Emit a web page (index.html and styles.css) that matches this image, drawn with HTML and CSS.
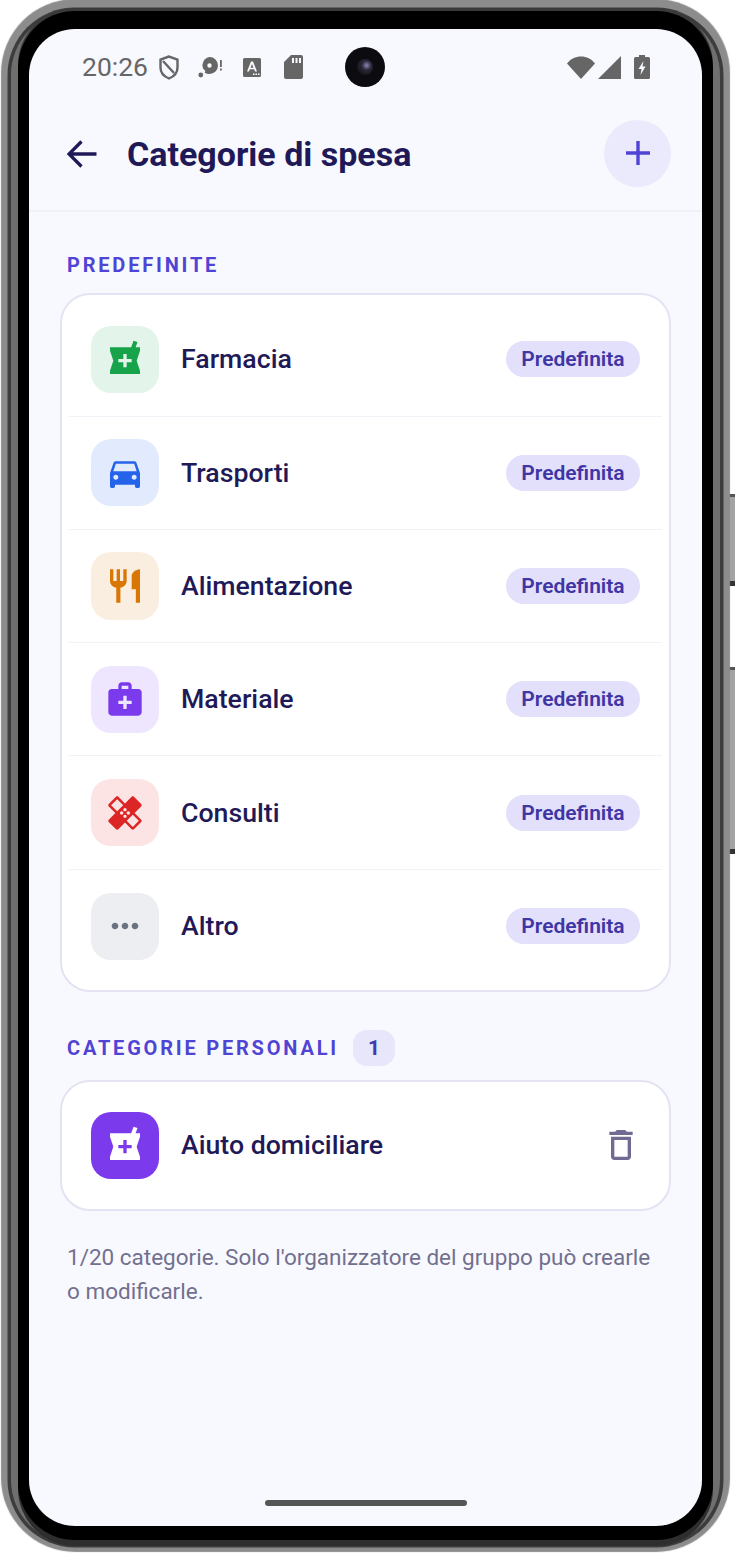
FILE: index.html
```html
<!DOCTYPE html>
<html lang="it">
  <head>
    <meta charset="UTF-8" />
    <meta name="viewport" content="width=device-width, initial-scale=1.0" />
    <title>Categorie di spesa</title>
    <link rel="stylesheet" href="styles.css">
  </head>

  <body>
    <div class="phone">
      <div class="side-btn side-btn-top"></div>
      <div class="side-btn side-btn-bottom"></div>

      <div class="screen">
        <div class="camera"><span></span></div>

        <div class="status-bar">
          <div class="status-left">
            <span class="time">20:26</span>
            <svg class="st-shield" viewBox="0 0 20 25"><path d="M10 1.500 1.500 4.500v8c0 5 3.500 9 8.500 11 5-2 8.500-6 8.500-11v-8z" fill="none" stroke="#666" stroke-width="2.400"/><path d="M4 6l11 12" stroke="#666" stroke-width="2.400"/></svg>
            <svg class="st-disc" viewBox="0 0 25 24"><path fill-rule="evenodd" fill="#666" d="M11.500 2a8.500 8.500 0 0 1 0 17 8.500 8.500 0 0 1-5-1.600l1-1.400-2.500-2.500A8.500 8.500 0 0 1 11.500 2zm0 6.300a2.200 2.200 0 1 0 0 4.400 2.200 2.200 0 0 0 0-4.400z"/><circle cx="2.800" cy="20" r="2.400" fill="#666"/><rect x="22" y="5" width="1.800" height="7" fill="#666"/><rect x="22" y="13.500" width="1.800" height="2" fill="#666"/></svg>
            <svg class="st-font" viewBox="0 0 18 19"><path fill-rule="evenodd" fill="#666" d="M1.500 0h15A1.500 1.500 0 0 1 18 1.500v16a1.500 1.500 0 0 1-1.500 1.500h-15A1.500 1.500 0 0 1 0 17.500v-16A1.500 1.500 0 0 1 1.500 0zM8 3.500 4 13.500h2l.8-2.200h4.400l.8 2.200h2L10 3.500zm1 2.400 1.500 3.800h-3z"/><rect x="10" y="15.500" width="1.500" height="1.500" fill="#fff"/><rect x="12.500" y="15.500" width="1.500" height="1.500" fill="#fff"/><rect x="15" y="15.500" width="1.500" height="1.500" fill="#fff"/></svg>
            <svg class="st-sd" viewBox="0 0 19 24"><path fill-rule="evenodd" fill="#666" d="M7 0h10a2 2 0 0 1 2 2v20a2 2 0 0 1-2 2H2a2 2 0 0 1-2-2V7zm1 3v5h2V3zm3.500 0v5h2V3zm3.500 0v5h2V3z"/></svg>
          </div>
          <div class="status-right">
            <svg class="st-wifi" viewBox="0 0 28 23"><path fill="#666" d="M14 23 0 7.500C3.500 3 8.500.5 14 .5s10.500 2.500 14 7z"/></svg>
            <svg class="st-signal" viewBox="0 0 23 23"><path fill="#666" d="M23 0v23H0z"/></svg>
            <svg class="st-battery" viewBox="0 0 16 24"><path fill-rule="evenodd" fill="#666" d="M5 0h6v2h3.500A1.500 1.500 0 0 1 16 3.500v19a1.500 1.500 0 0 1-1.500 1.500h-13A1.500 1.500 0 0 1 0 22.500v-19A1.500 1.500 0 0 1 1.500 2H5zm4.500 6L4.500 14H7.500l-1 6 5-8.500H8.500z"/></svg>
          </div>
        </div>

        <header class="app-header">
          <div class="header-left">
            <svg class="back-icon" viewBox="0 0 30 28"><path d="M29.500 14H2M14.500 1.500 2 14l12.500 12.500" fill="none" stroke="#1f1a57" stroke-width="3.300"/></svg>
            <h1>Categorie di spesa</h1>
          </div>
          <button class="add-btn">
            <svg viewBox="0 0 26 26"><path d="M13 1v24M1 13h24" fill="none" stroke="#5044d4" stroke-width="3.400"/></svg>
          </button>
        </header>

        <main class="content">
          <h2 class="section-label">PREDEFINITE</h2>
          <div class="card">
            <div class="row">
              <div class="cat-icon green"><svg viewBox="0 0 24 24"><path d="M21 5h-2.640l1.140-3.140L17.150 1l-1.460 4H3v2l2 6-2 6v2h18v-2l-2-6 2-6V5zm-5 9h-3v3h-2v-3H8v-2h3V9h2v3h3v2z"/></svg></div>
              <span class="cat-name">Farmacia</span>
              <span class="badge">Predefinita</span>
            </div>
            <div class="row">
              <div class="cat-icon blue"><svg viewBox="0 0 24 24"><path d="M18.920 6.010C18.720 5.420 18.160 5 17.500 5h-11c-.66 0-1.210.42-1.420 1.010L3 12v8c0 .55.45 1 1 1h1c.55 0 1-.45 1-1v-1h12v1c0 .55.45 1 1 1h1c.55 0 1-.45 1-1v-8l-2.080-5.990zM6.500 16c-.83 0-1.500-.67-1.500-1.500S5.670 13 6.500 13s1.500.67 1.500 1.500S7.330 16 6.500 16zm11 0c-.83 0-1.500-.67-1.500-1.500s.67-1.500 1.500-1.500 1.500.67 1.500 1.500-.67 1.500-1.500 1.500zM5 11l1.500-4.500h11L19 11H5z"/></svg></div>
              <span class="cat-name">Trasporti</span>
              <span class="badge">Predefinita</span>
            </div>
            <div class="row">
              <div class="cat-icon orange"><svg viewBox="0 0 24 24"><path d="M11 9H9V2H7v7H5V2H3v7c0 2.120 1.660 3.840 3.750 3.970V22h2.500v-9.030C11.340 12.840 13 11.120 13 9V2h-2v7zm5-3v8h2.500v8H21V2c-2.760 0-5 2.240-5 4z"/></svg></div>
              <span class="cat-name">Alimentazione</span>
              <span class="badge">Predefinita</span>
            </div>
            <div class="row">
              <div class="cat-icon purple"><svg viewBox="0 0 24 24"><path d="M20 6h-4V4c0-1.100-.9-2-2-2h-4c-1.100 0-2 .9-2 2v2H4c-1.100 0-2 .9-2 2v12c0 1.100.9 2 2 2h16c1.100 0 2-.9 2-2V8c0-1.100-.9-2-2-2zM10 4h4v2h-4V4zm6 11h-3v3h-2v-3H8v-2h3v-3h2v3h3v2z"/></svg></div>
              <span class="cat-name">Materiale</span>
              <span class="badge">Predefinita</span>
            </div>
            <div class="row">
              <div class="cat-icon red"><svg viewBox="0 0 24 24"><path d="M17.730 12.020l3.980-3.980c.39-.39.39-1.020 0-1.410l-4.340-4.340c-.39-.39-1.020-.39-1.410 0l-3.980 3.980L8 2.290C7.800 2.100 7.550 2 7.290 2c-.25 0-.51.1-.7.29L2.250 6.630c-.39.39-.39 1.020 0 1.410l3.980 3.980L2.250 16c-.39.39-.39 1.020 0 1.410l4.340 4.340c.39.39 1.020.39 1.410 0l3.980-3.980 3.980 3.980c.2.2.45.29.71.29.26 0 .51-.1.71-.29l4.340-4.340c.39-.39.39-1.020 0-1.410l-3.990-3.980zM12 9c.55 0 1 .45 1 1s-.45 1-1 1-1-.45-1-1 .45-1 1-1zm-4.710 1.960L3.660 7.340l3.630-3.630 3.620 3.620-3.620 3.630zM10 13c-.55 0-1-.45-1-1s.45-1 1-1 1 .45 1 1-.45 1-1 1zm2 2c-.55 0-1-.45-1-1s.45-1 1-1 1 .45 1 1-.45 1-1 1zm2-4c.55 0 1 .45 1 1s-.45 1-1 1-1-.45-1-1 .45-1 1-1zm2.660 9.340l-3.630-3.620 3.630-3.630 3.620 3.620-3.620 3.630z"/></svg></div>
              <span class="cat-name">Consulti</span>
              <span class="badge">Predefinita</span>
            </div>
            <div class="row">
              <div class="cat-icon gray"><svg viewBox="0 0 24 24"><path d="M6 10c-1.100 0-2 .9-2 2s.9 2 2 2 2-.9 2-2-.9-2-2-2zm12 0c-1.100 0-2 .9-2 2s.9 2 2 2 2-.9 2-2-.9-2-2-2zm-6 0c-1.100 0-2 .9-2 2s.9 2 2 2 2-.9 2-2-.9-2-2-2z"/></svg></div>
              <span class="cat-name">Altro</span>
              <span class="badge">Predefinita</span>
            </div>
          </div>

          <div class="section-head">
            <h2 class="section-label">CATEGORIE PERSONALI</h2>
            <span class="count">1</span>
          </div>
          <div class="card card-single">
            <div class="row">
              <div class="cat-icon solid"><svg viewBox="0 0 24 24"><path d="M21 5h-2.640l1.140-3.140L17.150 1l-1.460 4H3v2l2 6-2 6v2h18v-2l-2-6 2-6V5zm-5 9h-3v3h-2v-3H8v-2h3V9h2v3h3v2z"/></svg></div>
              <span class="cat-name">Aiuto domiciliare</span>
              <svg class="trash" viewBox="0 0 24 24"><path d="M16 9v10H8V9h8m-1.500-6h-5l-1 1H5v2h14V4h-3.500l-1-1zM18 7H6v12c0 1.100.9 2 2 2h8c1.100 0 2-.9 2-2V7z"/></svg>
            </div>
          </div>

          <p class="note">1/20 categorie. Solo l'organizzatore del gruppo può crearle o modificarle.</p>
        </main>

        <div class="home-bar"></div>
      </div>
    </div>
  </body>
</html>
```

FILE: styles.css
```css
* {
  margin: 0;
  padding: 0;
  box-sizing: border-box;
}

body {
  background-color: #ffffff;
  font-family: "Roboto", sans-serif;
  color: #1f1a57;
  overflow: hidden;
}

.phone {
  position: relative;
  width: 735px;
  height: 1553px;
  padding: 29px 33px 27px 29px;
}

.side-btn {
  position: absolute;
  left: 729px;
  width: 6px;
  background-color: #a3a3a3;
  border-top: 3px solid #555555;
  border-bottom: 5px solid #333333;
}

.side-btn-top {
  top: 494px;
  height: 92px;
}

.side-btn-bottom {
  top: 667px;
  height: 187px;
}

.screen {
  position: relative;
  display: flex;
  flex-direction: column;
  width: 673px;
  height: 1497px;
  background-color: #f8f9fe;
  border-radius: 46px;
  box-shadow:
    0 0 0 11px #000000,
    0 -7px 0 11px #000000,
    0 3px 0 11px #000000,
    0 -10px 0 11px #3a3a3a,
    0 9px 0 11px #2e2e2e,
    0 0 0 18px #6f6f6f,
    0 0 0 21.5px #3c3c3c,
    0 -2px 1px 28px #8c8c8c;
}

.camera {
  position: absolute;
  left: 316px;
  top: 18px;
  width: 40px;
  height: 40px;
  border-radius: 50%;
  background-color: #0c0c10;
  display: flex;
  align-items: center;
  justify-content: center;
}

.camera span {
  width: 16px;
  height: 16px;
  border-radius: 50%;
  background: radial-gradient(circle at 60% 40%, #8d86b8 0, #2a2838 35%, #15151b 75%);
}

/* status bar */
.status-bar {
  display: flex;
  justify-content: space-between;
  align-items: center;
  height: 76px;
  padding: 0 52px 0 53px;
}

.status-left,
.status-right {
  display: flex;
  align-items: center;
}

.time {
  font-size: 26.500px;
  color: #666666;
  width: 77px;
  margin-top: -2px;
}

.st-shield {
  width: 20px;
  height: 25px;
}

.st-disc {
  width: 25px;
  height: 24px;
  margin-left: 19px;
}

.st-font {
  width: 18px;
  height: 19px;
  margin-left: 20px;
}

.st-sd {
  width: 19px;
  height: 24px;
  margin-left: 23px;
}

.st-wifi {
  width: 28px;
  height: 23px;
}

.st-signal {
  width: 23px;
  height: 23px;
  margin-left: 3px;
}

.st-battery {
  width: 16px;
  height: 24px;
  margin-left: 13px;
}

/* app header */
.app-header {
  display: flex;
  justify-content: space-between;
  align-items: center;
  height: 107px;
  padding: 0 31px 7px 38px;
  border-bottom: 2px solid #f0f1f8;
}

.header-left {
  display: flex;
  align-items: center;
  gap: 30px;
}

.back-icon {
  width: 30px;
  height: 28px;
}

.app-header h1 {
  font-size: 34px;
  font-weight: 700;
  color: #1f1a57;
}

.add-btn {
  width: 67px;
  height: 67px;
  margin-top: -2px;
  border: none;
  border-radius: 50%;
  background-color: #ebe9fc;
  display: flex;
  align-items: center;
  justify-content: center;
}

.add-btn svg {
  width: 26px;
  height: 26px;
}

/* content */
.content {
  padding: 41px 31px 0;
}

.section-label {
  font-size: 20px;
  line-height: 24px;
  font-weight: 700;
  letter-spacing: 2.800px;
  color: #5044d4;
  padding-left: 7px;
  margin-bottom: 16px;
}

.section-head {
  display: flex;
  align-items: center;
  gap: 14px;
  margin-top: 38px;
  margin-bottom: 14px;
}

.section-head .section-label {
  margin-bottom: 0;
}

.count {
  width: 42px;
  height: 36px;
  border-radius: 14px;
  background-color: #e8e6fb;
  color: #4438b0;
  font-size: 21px;
  font-weight: 700;
  display: flex;
  align-items: center;
  justify-content: center;
}

.card {
  background-color: #ffffff;
  border: 2px solid #e3e3f3;
  border-radius: 30px;
  padding: 8.300px 7px 6.800px;
}

.card-single {
  padding: 6.800px 7px;
}

.row {
  display: flex;
  align-items: center;
  height: 113.300px;
  padding: 0 22px;
  border-bottom: 1.500px solid #f2f3f8;
}

.row:last-child {
  border-bottom: none;
}

.cat-icon {
  width: 68px;
  height: 67.500px;
  border-radius: 20px;
  display: flex;
  align-items: center;
  justify-content: center;
  flex-shrink: 0;
}

.cat-icon svg {
  width: 40px;
  height: 40px;
}

.green {
  background-color: #e3f4ea;
  fill: #16a34a;
}

.blue {
  background-color: #e2ebfd;
  fill: #2563eb;
}

.orange {
  background-color: #faeee0;
  fill: #d97706;
}

.purple {
  background-color: #eee6fe;
  fill: #7c3aed;
}

.red {
  background-color: #fce4e4;
  fill: #dc2626;
}

.gray {
  background-color: #eceef1;
  fill: #6b7280;
}

.solid {
  background-color: #7c3aed;
  fill: #ffffff;
}

.cat-name {
  margin-left: 22px;
  font-size: 26.700px;
  font-weight: 500;
  color: #1f1a57;
  flex: 1;
}

.badge {
  width: 134px;
  height: 36px;
  border-radius: 18px;
  background-color: #e2e0fb;
  color: #3f35a5;
  font-size: 21px;
  font-weight: 600;
  display: flex;
  align-items: center;
  justify-content: center;
}

.trash {
  width: 40px;
  height: 40px;
  fill: #6f6b93;
  margin-right: -1px;
}

.note {
  margin-top: 29px;
  padding: 0 20px 0 7px;
  font-size: 22.500px;
  line-height: 34px;
  color: #72708f;
}

.home-bar {
  width: 202px;
  height: 6px;
  border-radius: 3px;
  background-color: #555555;
  margin: auto 0 20px 236px;
}
```
